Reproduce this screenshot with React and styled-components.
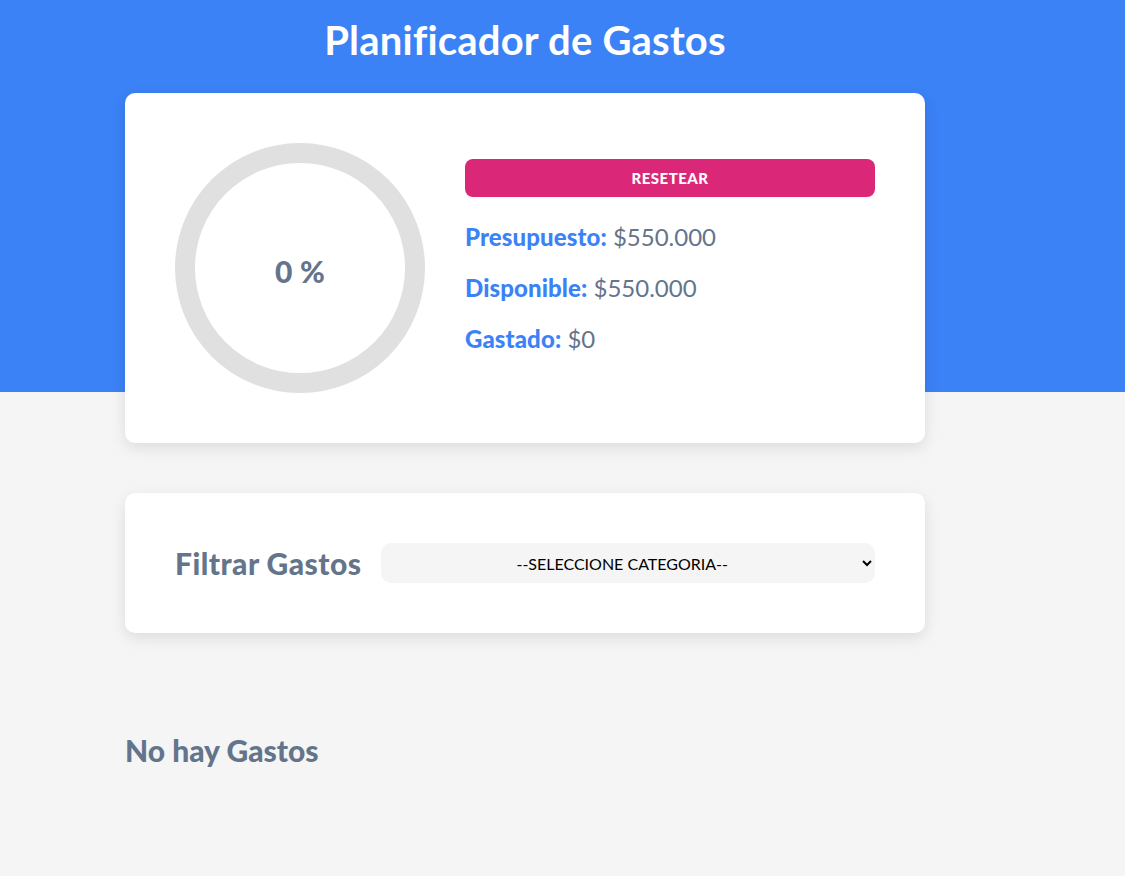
import React from "react";
import styled, { createGlobalStyle } from "styled-components";

const GlobalStyle = createGlobalStyle`
  body {
    margin: 0;
    background: #f5f5f5;
    font-family: Lato, "Liberation Sans", sans-serif;
  }
`;

const Header = styled.header`
  background: #3b82f6;
  height: 392px;
`;

const Container = styled.div`
  width: 800px;
  margin-left: 125px;
`;

const Title = styled.h1`
  margin: 0;
  padding: 16px 0 29px;
  font-size: 40px;
  line-height: 48px;
  font-weight: 700;
  letter-spacing: 0.2px;
  color: #fff;
  text-align: center;
`;

const Card = styled.div`
  background: #fff;
  border-radius: 10px;
  box-shadow: 0 5px 15px 0 rgba(0, 0, 0, 0.1);
  padding: 50px;
`;

const TwoColumns = styled.div`
  display: grid;
  grid-template-columns: 250px 1fr;
  gap: 40px;
  align-items: start;
`;

const Ring = styled.div`
  width: 250px;
  height: 250px;
  box-sizing: border-box;
  border: 20px solid #e0e0e0;
  border-radius: 50%;
  display: flex;
  align-items: center;
  justify-content: center;
  padding-top: 5px;
  font-size: 30px;
  font-weight: 900;
  letter-spacing: 0.3px;
  color: #64748b;
`;

const Info = styled.div`
  display: flex;
  flex-direction: column;
  padding-top: 16px;
`;

const ResetButton = styled.button`
  height: 38px;
  border: none;
  border-radius: 8px;
  background: #db2777;
  color: #fff;
  font-family: inherit;
  font-size: 15px;
  font-weight: 900;
  letter-spacing: 0.5px;
  text-transform: uppercase;
  cursor: pointer;
  margin-bottom: 25px;
`;

const Stat = styled.p`
  margin: 0 0 22px;
  font-size: 24px;
  line-height: 29px;
  color: #64748b;

  &:last-child {
    margin-bottom: 0;
  }

  span {
    font-weight: 900;
    letter-spacing: 0.1px;
    color: #3b82f6;
  }
`;

const FilterCard = styled(Card)`
  margin-top: 101px;
`;

const Field = styled.div`
  display: flex;
  align-items: center;
  gap: 20px;
`;

const Label = styled.label`
  font-size: 30px;
  font-weight: 900;
  letter-spacing: 0.45px;
  color: #64748b;
`;

const Select = styled.select`
  flex: 1;
  height: 40px;
  border: none;
  border-radius: 10px;
  background: #f5f5f5;
  font-family: inherit;
  font-size: 16px;
  color: #000;
  text-align: center;
  padding: 0 10px;
`;

const ListTitle = styled.h2`
  margin: 99px 0 0;
  font-size: 30px;
  line-height: 36px;
  font-weight: 900;
  color: #64748b;
`;

export default function App() {
  return (
    <>
      <GlobalStyle />
      <Header>
        <Container>
          <Title>Planificador de Gastos</Title>
          <Card>
            <TwoColumns>
              <Ring>0 %</Ring>
              <Info>
                <ResetButton type="button">Resetear</ResetButton>
                <Stat>
                  <span>Presupuesto:</span> $550.000
                </Stat>
                <Stat>
                  <span>Disponible:</span> $550.000
                </Stat>
                <Stat>
                  <span>Gastado:</span> $0
                </Stat>
              </Info>
            </TwoColumns>
          </Card>
        </Container>
      </Header>
      <Container>
        <FilterCard>
          <Field>
            <Label htmlFor="filtro">Filtrar Gastos</Label>
            <Select id="filtro" defaultValue="">
              <option value="">--SELECCIONE CATEGORIA--</option>
            </Select>
          </Field>
        </FilterCard>
        <ListTitle>No hay Gastos</ListTitle>
      </Container>
    </>
  );
}
